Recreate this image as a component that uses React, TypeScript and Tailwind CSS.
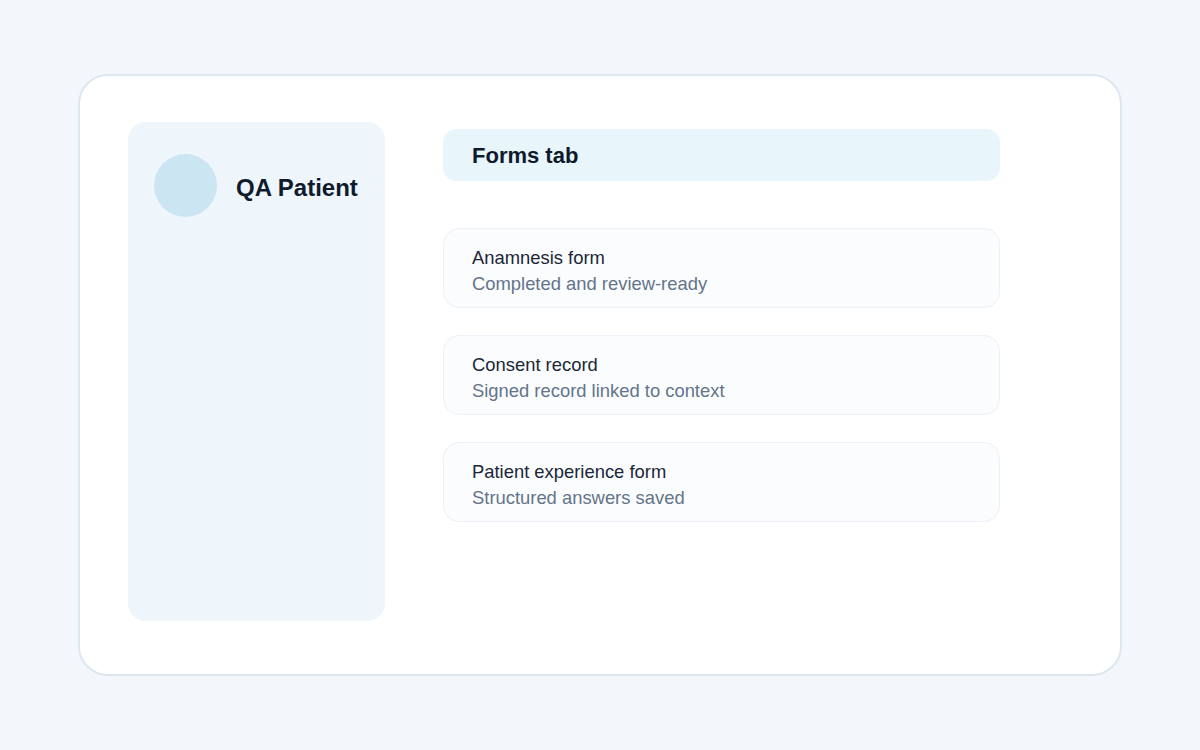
import React from "react";

const items = [
  { title: "Anamnesis form", sub: "Completed and review-ready" },
  { title: "Consent record", sub: "Signed record linked to context" },
  { title: "Patient experience form", sub: "Structured answers saved" },
];

export default function App() {
  return (
    <div
      className="w-[1200px] h-[750px] bg-[#f3f7fb] pt-[74px] pl-[78px]"
      style={{ fontFamily: '"Liberation Sans", Arial, sans-serif' }}
    >
      <div className="w-[1044px] h-[602px] bg-white rounded-[30px] border-2 border-[#dde7f0] pt-[46px] pl-[48px] flex gap-[58px]">
        <div className="w-[257px] h-[499px] rounded-[18px] bg-[#eef6fc] pt-[32px] pl-[26px] flex items-start">
          <div className="flex items-center gap-[19px]">
            <div className="w-[63px] h-[63px] rounded-full bg-[#cbe5f2]" />
            <div className="text-[24px] font-bold text-[#0f1b2d] leading-none pt-[4px]">QA Patient</div>
          </div>
        </div>
        <div className="w-[557px] pt-[7px] flex flex-col">
          <div className="h-[52px] rounded-[14px] bg-[#e8f5fb] flex items-center px-[29px]">
            <div className="text-[22px] font-bold text-[#0f1b2d]">Forms tab</div>
          </div>
          <div className="mt-[47px] flex flex-col gap-[27px]">
            {items.map((it) => (
              <div
                key={it.title}
                className="h-[80px] rounded-[16px] border border-[#ebf1f6] bg-[#fafcfd] px-[28px] pt-[16px] flex flex-col"
              >
                <div className="text-[18.4px] leading-[26px] text-[#1b2738]">{it.title}</div>
                <div className="text-[18.4px] leading-[26px] text-[#64748b]">{it.sub}</div>
              </div>
            ))}
          </div>
        </div>
      </div>
    </div>
  );
}
